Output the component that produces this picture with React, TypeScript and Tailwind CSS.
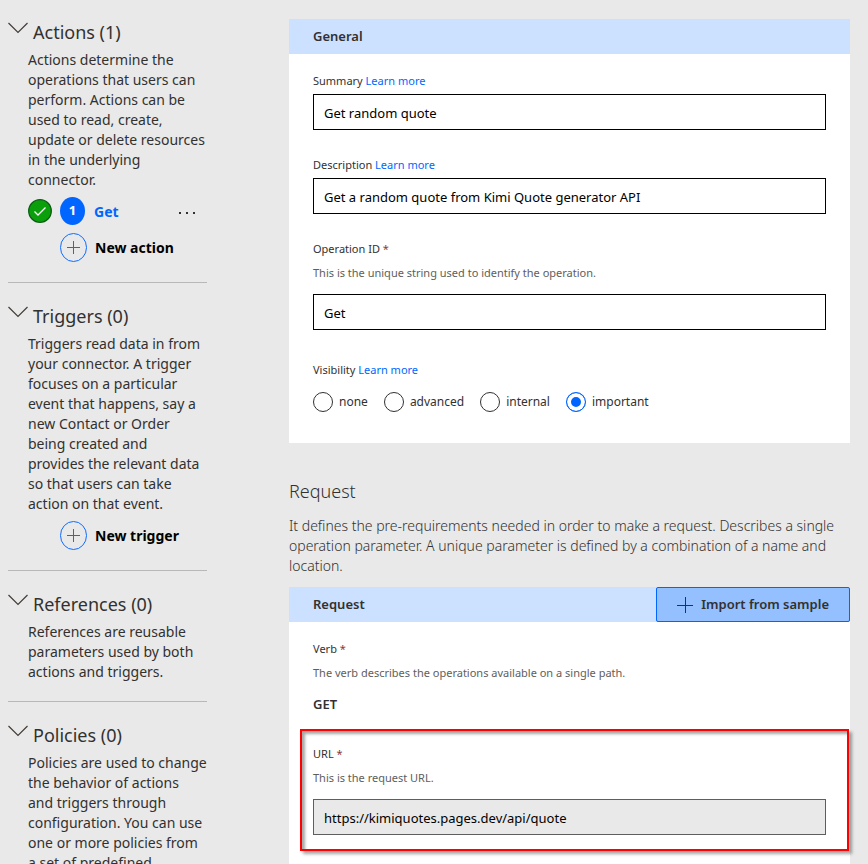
import React from "react";

interface SectionProps {
  title: string;
  text: string;
  children?: React.ReactNode;
}

const Chevron = () => (
  <svg className="w-5 h-3 shrink-0" viewBox="0 0 20 12" fill="none" stroke="#443c38" strokeWidth="1.2">
    <path d="M0.5 1 L10 10.5 L19.5 1" />
  </svg>
);

const SidebarSection: React.FC<SectionProps> = ({ title, text, children }) => (
  <section className="py-[19px] border-b border-[#b8b8b8] last:border-b-0">
    <h2 className="h-7 mb-1">
      <button className="flex items-start gap-[5px] text-[18px] leading-7 cursor-pointer whitespace-nowrap">
        <span className="pt-1">
          <Chevron />
        </span>
        {title}
      </button>
    </h2>
    <p className="pl-5 text-[14px] leading-5">{text}</p>
    {children}
  </section>
);

const AddButton: React.FC<{ label: string }> = ({ label }) => (
  <button className="flex items-center gap-2 ml-[52px] mt-[7px] pb-px text-[14px] font-bold text-black cursor-pointer whitespace-nowrap">
    <svg className="w-[27px] h-[29px]" viewBox="0 0 27 29" fill="none" stroke="#0f6cff">
      <ellipse cx="13.5" cy="14.5" rx="13" ry="14" />
      <path d="M7 14.5 H20 M13.5 8 V21" />
    </svg>
    {label}
  </button>
);

const LearnMore = () => (
  <a href="#" className="text-[#0066ff] hover:underline">
    Learn more
  </a>
);

interface FieldProps {
  id: string;
  label: string;
  value: string;
  help?: string;
  link?: boolean;
  required?: boolean;
  disabled?: boolean;
}

const Field: React.FC<FieldProps> = ({ id, label, value, help, link, required, disabled }) => (
  <div className="text-[11px] leading-4">
    <label htmlFor={id}>{label}</label>
    {required && <span className="text-[#8a3a36]"> *</span>}
    {link && (
      <>
        {" "}
        <LearnMore />
      </>
    )}
    {help && <p className="mt-2 mb-[13px] text-[#605e5c]">{help}</p>}
    <input
      id={id}
      type="text"
      defaultValue={value}
      disabled={disabled}
      className={
        help
          ? "block w-full h-9 px-[10px] pt-px text-[13px] text-black border border-black bg-white disabled:bg-[#e9e9e9] disabled:border-[#605e5c]"
          : "block w-full h-9 mt-[5px] px-[10px] pt-px text-[13px] text-black border border-black bg-white"
      }
    />
  </div>
);

const visibilities = ["none", "advanced", "internal", "important"];

export default function App() {
  return (
    <div className="flex min-h-screen bg-[#e9e9e9] text-[#323130] font-['Noto_Sans','Open_Sans',sans-serif]">
      <aside className="w-[199px] ml-2 -mt-px shrink-0">
        <SidebarSection
          title="Actions (1)"
          text="Actions determine the operations that users can perform. Actions can be used to read, create, update or delete resources in the underlying connector."
        >
          <div className="flex items-center pl-5 mt-[7px] mb-2 h-7">
            <svg className="w-6 h-6" viewBox="0 0 24 24" fill="none">
              <circle cx="12" cy="12" r="11.3" fill="#0b9f0b" stroke="#0b5f14" strokeWidth="1.3" />
              <path d="M6.5 12.5 L10 16 L17.5 8.5" stroke="#fff" strokeWidth="1.3" />
            </svg>
            <span className="flex items-center justify-center w-[25px] h-7 ml-2 rounded-[50%] bg-[#0066ff] text-white text-[13px] font-bold">
              1
            </span>
            <a href="#" className="ml-[9px] text-[14px] font-bold text-[#0066ff]">
              Get
            </a>
            <button aria-label="More" className="ml-auto mr-3 cursor-pointer">
              <svg className="w-4 h-4" viewBox="0 0 16 16" fill="#323130">
                <path d="M0 9h2v2H0zM7 9h2v2H7zM14 9h2v2h-2z" />
              </svg>
            </button>
          </div>
          <AddButton label="New action" />
        </SidebarSection>
        <SidebarSection
          title="Triggers (0)"
          text="Triggers read data in from your connector. A trigger focuses on a particular event that happens, say a new Contact or Order being created and provides the relevant data so that users can take action on that event."
        >
          <AddButton label="New trigger" />
        </SidebarSection>
        <SidebarSection
          title="References (0)"
          text="References are reusable parameters used by both actions and triggers."
        />
        <SidebarSection
          title="Policies (0)"
          text="Policies are used to change the behavior of actions and triggers through configuration. You can use one or more policies from a set of predefined"
        />
      </aside>

      <main className="flex-1 min-w-0 ml-[82px] mr-[18px] pt-[19px]">
        <section className="bg-white">
          <h3 className="flex items-center h-[35px] px-6 pt-px bg-[#cce0ff] text-[13px] font-semibold">General</h3>
          <div className="px-6 pt-[19px] pb-[31px]">
            <div className="flex flex-col gap-[27px]">
              <Field id="summary" label="Summary" value="Get random quote" link />
              <Field id="description" label="Description" value="Get a random quote from Kimi Quote generator API" link />
              <Field
                id="operation-id"
                label="Operation ID"
                value="Get"
                help="This is the unique string used to identify the operation."
                required
              />
            </div>
            <fieldset className="mt-8">
              <legend className="text-[11px] leading-4">
                Visibility <LearnMore />
              </legend>
              <div className="flex gap-4 mt-[14px] text-[12px] leading-5">
                {visibilities.map((v) => (
                  <label key={v} className="flex items-center gap-[6px]">
                    <input
                      type="radio"
                      name="visibility"
                      defaultChecked={v === "important"}
                      className="appearance-none w-5 h-5 rounded-full border border-[#323130] bg-white checked:border-[#0066ff] checked:bg-[#0066ff] checked:shadow-[inset_0_0_0_4px_#fff]"
                    />
                    {v}
                  </label>
                ))}
              </div>
            </fieldset>
          </div>
        </section>

        <h2 className="mt-[34px] mb-[11px] text-[18px] leading-7 font-light">Request</h2>
        <p className="mb-[11px] text-[14px] leading-5 font-light">
          It defines the pre-requirements needed in order to make a request. Describes a single operation parameter. A
          unique parameter is defined by a combination of a name and location.
        </p>

        <section className="bg-white">
          <div className="flex items-center justify-between h-[35px] bg-[#cce0ff] text-[13px] font-semibold">
            <h3 className="pl-6 pt-px">Request</h3>
            <button className="flex items-center gap-2 h-full px-5 rounded-[2px] border border-[#0066ff] bg-[#94c0ff] cursor-pointer">
              <svg className="w-4 h-4" viewBox="0 0 16 16" stroke="#323130">
                <path d="M0 8.5 H16 M8.5 0 V16" />
              </svg>
              Import from sample
            </button>
          </div>
          <div className="px-6 pt-[19px] pb-8">
            <div className="text-[11px] leading-4">
              Verb<span className="text-[#8a3a36]"> *</span>
              <p className="mt-2 text-[#605e5c]">The verb describes the operations available on a single path.</p>
            </div>
            <p className="mt-[13px] text-[13px] leading-5 font-semibold">GET</p>
            <div className="-ml-[13px] -mr-[23px] mt-[15px] pt-[15px] pb-[14px] pl-[11px] pr-[21px] border-2 border-[#ff0000] shadow-[3px_3px_3px_rgba(0,0,0,0.35),inset_3px_3px_3px_rgba(0,0,0,0.35)]">
              <Field
                id="url"
                label="URL"
                value="https://kimiquotes.pages.dev/api/quote"
                help="This is the request URL."
                required
                disabled
              />
            </div>
          </div>
        </section>
      </main>
    </div>
  );
}
